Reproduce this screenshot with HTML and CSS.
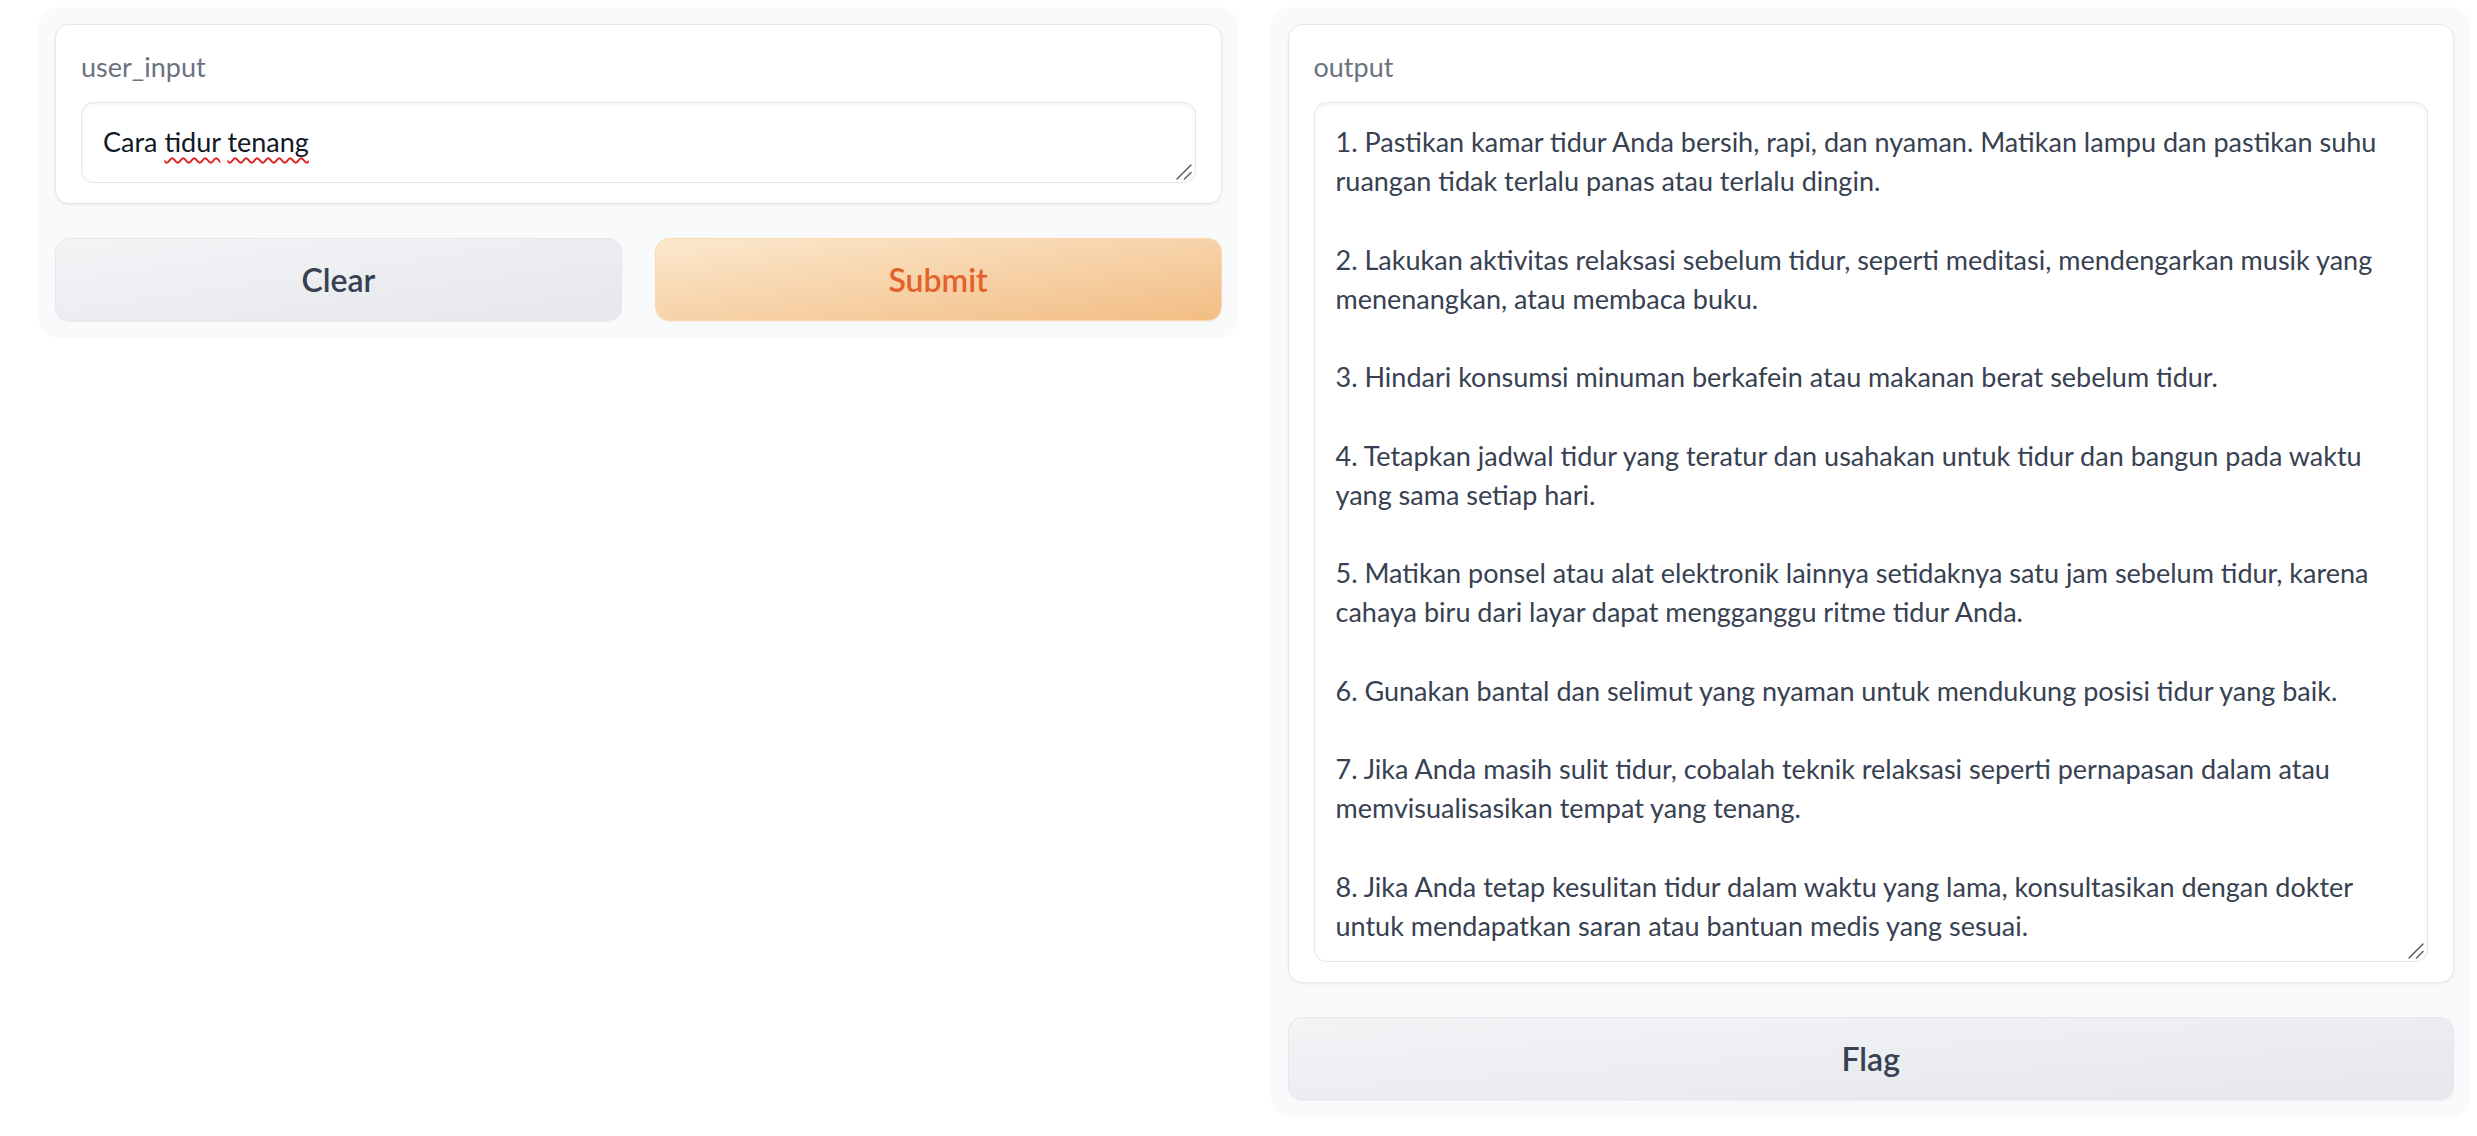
FILE: index.html
```html
<!DOCTYPE html>
<html lang="id">
<head>
<meta charset="utf-8">
<title>Gradio</title>
<link rel="stylesheet" href="styles.css">
</head>
<body>
<div class="app">
  <div class="col">
    <div class="block">
      <label class="label">user_input</label>
      <div class="textbox input-box">Cara <span class="typo">tidur</span> <span class="typo">tenang</span><svg class="grip" viewBox="0 0 16 16" width="16" height="16"><path d="M1 15L15 1M8.5 15L15 8.5"/></svg></div>
    </div>
    <div class="btn-row">
      <button class="btn secondary">Clear</button>
      <button class="btn primary">Submit</button>
    </div>
  </div>
  <div class="col">
    <div class="block">
      <label class="label">output</label>
      <div class="textbox output-box">1. Pastikan kamar tidur Anda bersih, rapi, dan nyaman. Matikan lampu dan pastikan suhu
ruangan tidak terlalu panas atau terlalu dingin.

2. Lakukan aktivitas relaksasi sebelum tidur, seperti meditasi, mendengarkan musik yang
menenangkan, atau membaca buku.

3. Hindari konsumsi minuman berkafein atau makanan berat sebelum tidur.

4. Tetapkan jadwal tidur yang teratur dan usahakan untuk tidur dan bangun pada waktu
yang sama setiap hari.

5. Matikan ponsel atau alat elektronik lainnya setidaknya satu jam sebelum tidur, karena
cahaya biru dari layar dapat mengganggu ritme tidur Anda.

6. Gunakan bantal dan selimut yang nyaman untuk mendukung posisi tidur yang baik.

7. Jika Anda masih sulit tidur, cobalah teknik relaksasi seperti pernapasan dalam atau
memvisualisasikan tempat yang tenang.

8. Jika Anda tetap kesulitan tidur dalam waktu yang lama, konsultasikan dengan dokter
untuk mendapatkan saran atau bantuan medis yang sesuai.<svg class="grip" viewBox="0 0 16 16" width="16" height="16"><path d="M1 15L15 1M8.5 15L15 8.5"/></svg></div>
    </div>
    <button class="btn secondary">Flag</button>
  </div>
</div>
</body>
</html>
```

FILE: styles.css
```css
* { box-sizing: border-box; }

html, body {
  margin: 0;
  padding: 0;
  background: #ffffff;
  font-family: Lato, "Noto Sans", sans-serif;
}

.app {
  display: flex;
  align-items: flex-start;
  gap: 33px;
  padding: 7px 7px 0 38px;
}

.col {
  flex: 1 1 0;
  min-width: 0;
  display: flex;
  flex-direction: column;
  gap: 34px;
  background: #f9fafb;
  border-radius: 20px;
  padding: 17px 16px 17px 17px;
}

.block {
  display: flex;
  flex-direction: column;
  background: #ffffff;
  border: 1px solid #e5e7eb;
  border-radius: 14px;
  box-shadow: 0 1px 3px rgba(0, 0, 0, 0.06);
  padding: 23px 25px 20px 25px;
}

.label {
  display: block;
  font-size: 27px;
  line-height: 38px;
  color: #6b7280;
  margin-bottom: 16px;
}

.textbox {
  position: relative;
  border: 1px solid #e5e7eb;
  border-radius: 12px;
  background: #ffffff;
  box-shadow: inset 0 2px 4px rgba(0, 0, 0, 0.05);
  padding: 19px 21px;
  font-size: 27px;
  line-height: 39.2px;
  overflow: hidden;
}

.grip {
  position: absolute;
  right: 3px;
  bottom: 2px;
  fill: none;
  stroke: #5f5f5f;
  stroke-width: 1.5;
  stroke-linecap: round;
}

.input-box {
  height: 81px;
  color: #111827;
}

.typo {
  text-decoration: underline wavy #e11d1d;
  text-decoration-thickness: 1.5px;
  text-underline-offset: 5px;
  text-decoration-skip-ink: none;
}

.output-box {
  height: 860px;
  color: #374151;
  white-space: pre;
}

.btn-row {
  display: flex;
  gap: 33px;
}

.btn-row .btn {
  flex: 1 1 0;
}

.btn {
  height: 83px;
  border-radius: 14px;
  font-family: Lato, "Noto Sans", sans-serif;
  font-size: 32px;
  font-weight: 600;
  cursor: pointer;
  box-shadow: 0 1px 2px rgba(0, 0, 0, 0.05);
}

.secondary {
  border: 1px solid #e5e7eb;
  background: linear-gradient(to bottom right, #f3f4f6, #e5e7eb);
  color: #374151;
}

.primary {
  border: 1px solid #fed7aa;
  background: linear-gradient(to bottom right, #fce8ce, #f2bd84);
  color: #e4622a;
}
```
